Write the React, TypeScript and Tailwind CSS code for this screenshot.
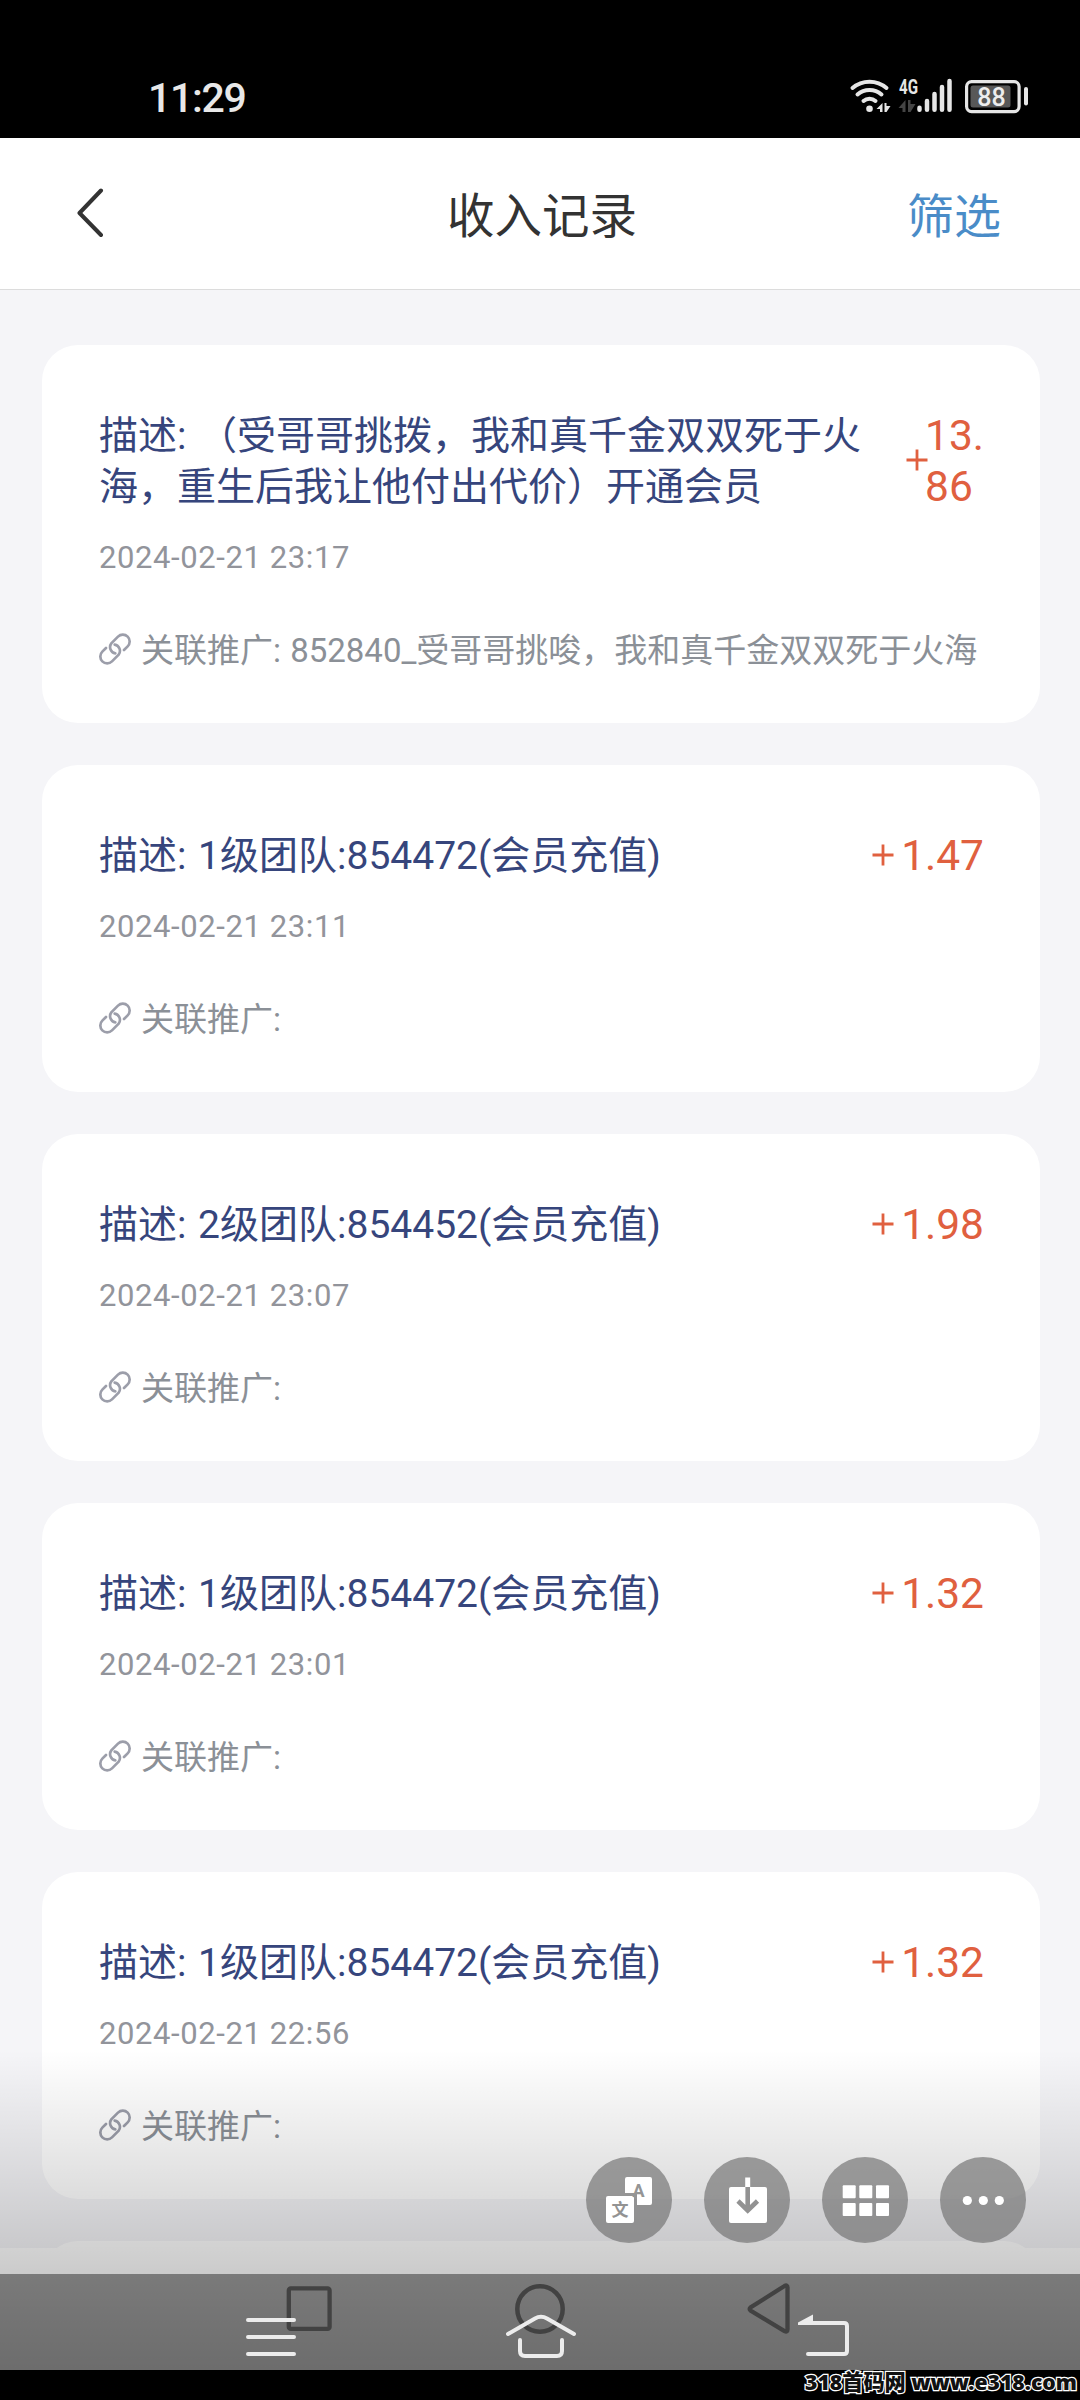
const records = [
  {
    id: 1,
    desc: "（受哥哥挑拨，我和真千金双双死于火海，重生后我让他付出代价）开通会员",
    amount: ["13.", "86"],
    time: "2024-02-21 23:17",
    promo: "852840_受哥哥挑唆，我和真千金双双死于火海",
  },
  { id: 2, desc: "1级团队:854472(会员充值)", amount: ["1.47"], time: "2024-02-21 23:11", promo: "" },
  { id: 3, desc: "2级团队:854452(会员充值)", amount: ["1.98"], time: "2024-02-21 23:07", promo: "" },
  { id: 4, desc: "1级团队:854472(会员充值)", amount: ["1.32"], time: "2024-02-21 23:01", promo: "" },
  { id: 5, desc: "1级团队:854472(会员充值)", amount: ["1.32"], time: "2024-02-21 22:56", promo: "" },
];

function StatusBar() {
  return (
    <div className="h-[138px] bg-black flex items-end justify-between pl-[148px] pr-[50px] pb-[15px]">
      <span className="text-[41px] leading-[50px] tracking-[-1.3px] font-medium text-[#e8e8e8]">11:29</span>
      <svg width="182" height="50" viewBox="848 73 182 50" fill="none">
        {/* wifi */}
        <g stroke="#e6e6e6" strokeWidth="4" strokeLinecap="round">
          <path d="M852.5 88a26 26 0 0 1 34 0" />
          <path d="M857.5 94.500a18 18 0 0 1 24 0" />
          <path d="M863.5 101a9 9 0 0 1 12 0" />
        </g>
        <circle cx="869.5" cy="108.700" r="3.300" fill="#e6e6e6" />
        <path d="M876.500 109l6-6v9h-2.500v-3zM884.500 103h2v3h4l-4 6h-2z" fill="#e6e6e6" />
        {/* mobile signal */}
        <text x="899" y="94" fontSize="20" fontWeight="700" fill="#e6e6e6" textLength="19" lengthAdjust="spacingAndGlyphs">
          4G
        </text>
        <path d="M898.500 108l7-8v12h-3v-4zM908 100h2.500v4h5l-5 8H908z" fill="#444" />
        <g stroke="#e6e6e6" strokeWidth="4.500" strokeLinecap="round">
          <path d="M919.500 107.800v2M927 101v8.800M934.500 94v15.800M942 87v22.800M949.500 81v28.800" />
        </g>
        {/* battery */}
        <rect x="966.600" y="81.600" width="52.500" height="30" rx="5" stroke="#e6e6e6" strokeWidth="3.200" />
        <rect x="970.500" y="85.500" width="40" height="22" rx="2.500" fill="#585858" />
        <rect x="1024" y="87" width="4" height="18.500" rx="2" fill="#e6e6e6" />
        <text x="991.500" y="106" fontSize="25" fontWeight="500" fill="#ededed" textAnchor="middle">
          88
        </text>
      </svg>
    </div>
  );
}

function Header() {
  return (
    <header className="h-[152px] bg-white border-b border-[#dcdcdc] grid grid-cols-[1fr_auto_1fr] items-center pl-[77px] pr-[79px]">
      <svg width="28" height="50" viewBox="0 0 28 50" fill="none" stroke="#333" strokeWidth="4" strokeLinecap="round" strokeLinejoin="round" className="-mt-0.5">
        <path d="M24 2.500 2.500 25 24 47" />
      </svg>
      <h1 className="pt-1.5 pl-1.5 text-[47.5px] leading-[60px] text-[#333]">收入记录</h1>
      <button className="pt-1.5 justify-self-end text-[47px] leading-[60px] text-[#4a8cc8]">筛选</button>
    </header>
  );
}

function ChainIcon() {
  return (
    <svg width="32" height="32" viewBox="0 0 96 96" fill="none" stroke="#9c9eaa" strokeWidth="8" strokeLinecap="round" className="mr-2.5 -mt-1">
      <path d="M75 51L86 40A20.500 20.500 0 0 0 57 11L37 31A19 19 0 0 0 49 61" />
      <path d="M21 45L10 56A20.500 20.500 0 0 0 39 85L59 65A19 19 0 0 0 47 35" />
    </svg>
  );
}

function RecordCard({ record }: { record: (typeof records)[number] }) {
  return (
    <div className="bg-white rounded-[36px] px-[57px] pt-[66px] pb-[50px] shrink-0">
      <div className="flex justify-between items-center text-[39px] leading-[51px]">
        <p className="w-[772px] text-[#36457c] [word-spacing:2px]">{`描述: ${record.desc}`}</p>
        <div className="flex items-center text-[42.5px] text-[#e0603f] -mt-[3px] -mr-px">
          <svg width="22" height="22" viewBox="0 0 22 22" stroke="currentColor" strokeWidth="2.800" className="-mt-px">
            <path d="M11 .5v21M.5 11h21" />
          </svg>
          <span className={record.amount.length > 1 ? "-ml-[3px]" : "ml-[7px]"}>
            {record.amount.map((part) => (
              <span key={part} className="block">{part}</span>
            ))}
          </span>
        </div>
      </div>
      <p className="mt-[22px] text-[31px] leading-[45px] tracking-[0.6px] text-[#92949b]">{record.time}</p>
      <div className="mt-12 flex items-center text-[33px] leading-[45px] text-[#8b9097]">
        <ChainIcon />
        <span className="whitespace-nowrap [word-spacing:1px]">{`关联推广: ${record.promo}`}</span>
      </div>
    </div>
  );
}

function FloatingTools() {
  const circle = "size-[86px] rounded-full bg-[rgba(111,111,111,0.65)]";
  return (
    <div className="absolute top-[2157px] right-[54px] flex gap-8">
      <svg className={circle} viewBox="0 0 86 86">
        <path d="M41 20h23a2 2 0 0 1 2 2v24a2 2 0 0 1-2 2H51V36H39V22a2 2 0 0 1 2-2z" fill="#fff" />
        <rect x="20" y="39" width="28" height="27" rx="2" fill="#fff" />
        <text x="52.500" y="40" fontSize="18" fontWeight="700" fill="#959595" textAnchor="middle">A</text>
        <text x="34" y="59" fontSize="17" fontWeight="700" fill="#939393" textAnchor="middle">文</text>
      </svg>
      <svg className={circle} viewBox="0 0 86 86" fill="none">
        <rect x="25" y="30" width="38" height="36" rx="2" fill="#fff" />
        <path d="M43.700 20.500V30" stroke="#fff" strokeWidth="5" />
        <path d="M43.700 30v23M34 44l9.700 9.500L53.500 44" stroke="#929292" strokeWidth="4.600" />
      </svg>
      <svg className={circle} viewBox="0 0 86 86" fill="#fff">
        {[20.7, 37.3, 54].map((x) => (
          <g key={x}>
            <rect x={x} y="28.300" width="13" height="13" rx="1" />
            <rect x={x} y="46" width="13" height="13" rx="1" />
          </g>
        ))}
      </svg>
      <svg className={circle} viewBox="0 0 86 86" fill="#fff">
        <circle cx="27.300" cy="43.500" r="4.600" />
        <circle cx="43.300" cy="43.500" r="4.600" />
        <circle cx="59.300" cy="43.500" r="4.600" />
      </svg>
    </div>
  );
}

function NavBar() {
  return (
    <nav className="relative h-24 pl-[244px] flex items-center">
      <svg width="90" height="96" viewBox="244 2274 90 96" fill="none">
        <rect x="288.800" y="2288.400" width="40.800" height="40.500" rx="2" stroke="#424242" strokeWidth="4.300" />
        <path d="M248 2320h46M248 2337h46M248 2354h46" stroke="#ececec" strokeWidth="4" strokeLinecap="round" />
      </svg>
      <svg width="72" height="96" viewBox="505 2274 72 96" fill="none" className="ml-[171px]">
        <circle cx="540" cy="2309" r="22.700" stroke="#424242" strokeWidth="4.500" />
        <path
          d="M508 2334l27-15.500q6-3.500 12 0l27 15.500M520 2340v11q0 5 5 5h32q5 0 5-5v-11"
          stroke="#ececec"
          strokeWidth="4"
          strokeLinecap="round"
        />
      </svg>
      <svg width="106" height="96" viewBox="746 2274 106 96" fill="none" className="ml-[169px]">
        <path d="M750.500 2307.500q-1.500 1.500 0 3l34 20.500q3 1.500 3-1.500v-42q0-3-3-1.500z" stroke="#424242" strokeWidth="4.300" />
        <path d="M811 2323h33q3 0 3 3v25q0 3-3 3h-36" stroke="#ececec" strokeWidth="4" strokeLinecap="round" />
        <path d="M798 2325v-2.500l15-8v10.500z" fill="#ececec" />
      </svg>
    </nav>
  );
}

export default function App() {
  return (
    <div className="relative w-[1080px] h-[2400px] overflow-hidden flex flex-col bg-white font-[Roboto,'Noto_Sans_CJK_SC',sans-serif]">
      <StatusBar />
      <Header />
      <main className="h-[1958px] overflow-hidden bg-[#f5f5f8] flex flex-col gap-[42px] pt-[55px] pl-[42px] pr-10">
        {records.map((record) => (
          <RecordCard key={record.id} record={record} />
        ))}
        <div className="h-[327px] shrink-0 rounded-[36px] bg-white" />
      </main>
      <div className="h-[26px]" />
      <div className="bg-black/40">
        {/* bottom shade */}
        <div className="absolute top-[2050px] inset-x-0 h-80 bg-[linear-gradient(to_bottom,rgba(0,0,0,0),rgba(0,0,0,0.29))]" />
        <NavBar />
      </div>
      <FloatingTools />
      <footer className="h-[30px] bg-black flex items-start justify-end pr-[3px]">
        <span className="text-[21.2px] leading-[24px] font-black text-[#111] whitespace-nowrap font-['Noto_Sans','Noto_Sans_CJK_SC',sans-serif] [-webkit-text-stroke:2.5px_#fff] [paint-order:stroke]">
          318首码网 www.e318.com
        </span>
      </footer>
    </div>
  );
}
